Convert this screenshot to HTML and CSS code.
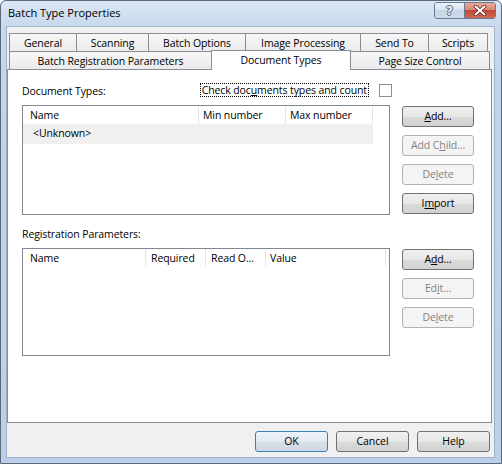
FILE: index.html
```html
<!DOCTYPE html>
<html>
<head>
<meta charset="utf-8">
<title>Batch Type Properties</title>
<link rel="stylesheet" href="styles.css">
</head>
<body>
<div class="window">
  <div class="titlebar">
    <span class="title">Batch Type Properties</span>
    <div class="caption">
      <span class="cap-btn cap-help">?</span>
      <span class="cap-btn cap-close">
        <svg width="14" height="11" viewBox="0 0 14 11"><path d="M2.5 1.5 L11.5 9.5 M11.5 1.5 L2.5 9.5" stroke="#5a1e18" stroke-width="3.6" stroke-linecap="round"/><path d="M2.5 1.5 L11.5 9.5 M11.5 1.5 L2.5 9.5" stroke="#ffffff" stroke-width="2" stroke-linecap="round"/></svg>
      </span>
    </div>
  </div>
  <div class="client">
    <div class="tabrow row-back">
      <div class="tab t-general">General</div>
      <div class="tab t-scanning">Scanning</div>
      <div class="tab t-batchopt">Batch Options</div>
      <div class="tab t-imgproc">Image Processing</div>
      <div class="tab t-sendto">Send To</div>
      <div class="tab t-scripts">Scripts</div>
    </div>
    <div class="tabrow row-front">
      <div class="tab t-brp">Batch Registration Parameters</div>
      <div class="tab tab-selected t-doc">Document Types</div>
      <div class="tab t-psc">Page Size Control</div>
    </div>
    <div class="page">
      <div class="page-head">
        <span class="label label-doc">Document Types:</span>
        <div class="check-group">
          <span class="focus-label">Check doc<u>u</u>ments types and count</span>
          <span class="checkbox"></span>
        </div>
      </div>
      <div class="section">
        <div class="listview lv-doc">
          <div class="lv-header">
            <div class="col d-name">Name</div>
            <div class="col d-min">Min number</div>
            <div class="col d-max">Max number</div>
          </div>
          <div class="lv-row selected">&lt;Unknown&gt;</div>
        </div>
        <div class="btn-col">
          <button class="btn"><span><u>A</u>dd...</span></button>
          <button class="btn disabled"><span>Add C<u>h</u>ild...</span></button>
          <button class="btn disabled"><span>De<u>l</u>ete</span></button>
          <button class="btn"><span>I<u>m</u>port</span></button>
        </div>
      </div>
      <div class="label label-reg">Registration Parameters:</div>
      <div class="section">
        <div class="listview lv-reg">
          <div class="lv-header">
            <div class="col r-name">Name</div>
            <div class="col r-req">Required</div>
            <div class="col r-read">Read O...</div>
            <div class="col r-val">Value</div>
          </div>
        </div>
        <div class="btn-col">
          <button class="btn"><span>A<u>d</u>d...</span></button>
          <button class="btn disabled"><span>Ed<u>i</u>t...</span></button>
          <button class="btn disabled"><span>De<u>l</u>ete</span></button>
        </div>
      </div>
    </div>
    <div class="footer">
      <button class="btn btn-wide btn-default"><span>OK</span></button>
      <button class="btn btn-wide"><span>Cancel</span></button>
      <button class="btn btn-wide"><span>Help</span></button>
    </div>
  </div>
</div>
</body>
</html>
```

FILE: styles.css
```css
* { box-sizing: border-box; }
html, body { margin: 0; padding: 0; }
body {
  width: 502px;
  height: 464px;
  overflow: hidden;
  background: #ffffff;
  font-family: "Open Sans", "Noto Sans", sans-serif;
  font-size: 10.5px;
  letter-spacing: -0.1px;
  color: #000000;
}

/* window frame */
.window {
  width: 502px;
  height: 464px;
  display: flex;
  flex-direction: column;
  border: 1px solid #5b6878;
  border-radius: 6px 6px 0 0;
  padding: 0 7px 6px 6px;
  background: linear-gradient(to bottom, #dae6f4 0px, #c8d9ed 26px, #c2d5ea 80px, #bbd0e8 100%);
}
.titlebar {
  flex: none;
  height: 26px;
  display: flex;
  align-items: flex-start;
}
.title {
  padding-left: 1px;
  line-height: 24px;
  font-size: 11px;
  letter-spacing: 0;
}
.caption {
  margin-left: auto;
  margin-right: -2px;
  margin-top: 1px;
  height: 17px;
  display: flex;
  border: 1px solid #687a92;
  border-radius: 3px;
  overflow: hidden;
}
.cap-btn {
  height: 100%;
  display: flex;
  align-items: center;
  justify-content: center;
}
.cap-help {
  width: 30px;
  border-right: 1px solid #687a92;
  background: linear-gradient(to bottom, #edf3fa 0%, #d9e5f2 45%, #c4d5e9 50%, #cddcee 100%);
  color: #e9eef5;
  font-family: "DejaVu Sans", sans-serif;
  font-weight: bold;
  font-size: 12px;
  letter-spacing: 0;
  text-shadow: 1px 0 0 #5d6a7a, -1px 0 0 #5d6a7a, 0 1px 0 #5d6a7a, 0 -1px 0 #5d6a7a;
}
.cap-close {
  width: 30px;
  background: linear-gradient(to bottom, #eaa898 0%, #d9897a 45%, #c4493a 50%, #d06a55 100%);
}

/* client area */
.client {
  flex: 1;
  display: flex;
  flex-direction: column;
  background: #f0f0f0;
  box-shadow: 0 0 0 1px #9fb2c9;
}

/* tabs */
.tabrow {
  flex: none;
  height: 18px;
  margin-left: 2px;
  display: flex;
}
.row-back { margin-top: 6px; }
.row-front { align-items: flex-end; }
.tab {
  height: 18px;
  border: 1px solid #898c95;
  border-right: 0;
  border-bottom: 0;
  background: linear-gradient(to bottom, #f7f7f7, #ebebeb);
  display: flex;
  align-items: center;
  justify-content: center;
  line-height: 16px;
  white-space: nowrap;
}
.tab:last-child { border-right: 1px solid #898c95; }
.t-general { width: 67px; }
.t-scanning { width: 72px; }
.t-batchopt { width: 97px; }
.t-imgproc { width: 115px; }
.t-sendto { width: 68px; }
.t-scripts { width: 60px; }
.t-brp { width: 202px; }
.t-doc { width: 140px; }
.t-psc { width: 139px; border-left: 0; }
.tab-selected {
  height: 20px;
  margin-bottom: -1px;
  border-right: 1px solid #898c95;
  background: #ffffff;
  position: relative;
  z-index: 1;
  align-items: flex-start;
  padding-top: 1px;
}

/* page */
.page {
  flex: none;
  width: 485px;
  height: 354px;
  border: 1px solid #898c95;
  background: #ffffff;
  padding-left: 14px;
}
.page-head {
  width: 370px;
  height: 35px;
  display: flex;
  justify-content: space-between;
  align-items: flex-start;
}
.label-doc {
  margin-top: 14px;
  line-height: 15px;
}
.check-group {
  margin-top: 13px;
  display: flex;
  align-items: flex-start;
}
.focus-label {
  border: 1px dotted #000000;
  padding: 0 1px;
  line-height: 12px;
  white-space: nowrap;
}
.checkbox {
  width: 13px;
  height: 13px;
  margin-left: 10px;
  margin-top: 1px;
  border: 1px solid #8e8f8f;
  background: #ffffff;
}
.label-reg {
  margin-top: 12px;
  margin-bottom: 6px;
  line-height: 15px;
}

.section {
  display: flex;
  align-items: flex-start;
}
.listview {
  width: 368px;
  border: 1px solid #828790;
  background: #ffffff;
}
.lv-doc { height: 110px; }
.lv-reg { height: 108px; }
.lv-header {
  height: 18px;
  display: flex;
}
.lv-reg .lv-header { height: 17px; }
.col {
  height: 100%;
  border-right: 1px solid #e5e5e5;
  line-height: 18px;
  padding-left: 4px;
  white-space: nowrap;
  overflow: hidden;
}
.d-name { width: 176px; padding-left: 7px; }
.d-min { width: 87px; }
.d-max { width: 87px; }
.r-name { width: 123px; padding-left: 7px; }
.r-req { width: 60px; padding-left: 5px; }
.r-read { width: 60px; padding-left: 5px; }
.r-val { width: 120px; padding-left: 4px; }
.lv-row {
  width: 350px;
  height: 20px;
  line-height: 19px;
  padding-left: 10px;
}
.lv-row.selected { background: #f0f0f0; }

/* buttons */
.btn-col {
  margin-left: 12px;
  padding-top: 1px;
  display: flex;
  flex-direction: column;
  gap: 8px;
}
.btn {
  width: 72px;
  height: 21px;
  padding: 0;
  margin: 0;
  border: 1px solid #707070;
  border-radius: 3px;
  background: linear-gradient(to bottom, #f0f0f0 0%, #e6e6e6 50%, #dadada 51%, #d2d2d2 100%);
  font: inherit;
  letter-spacing: inherit;
  color: #000000;
  display: flex;
  align-items: center;
  justify-content: center;
  line-height: 17px;
}
.btn.disabled {
  border-color: #adb2b5;
  background: #f4f4f4;
  color: #838383;
}
.btn-wide { width: 73px; }
.btn-default {
  border-color: #3c7fb1;
  background: linear-gradient(to bottom, #eef3f8 0%, #e3e9f0 50%, #d7dfe8 51%, #d0d9e3 100%);
}

/* footer */
.footer {
  flex: none;
  margin-top: 8px;
  padding-right: 4px;
  display: flex;
  justify-content: flex-end;
  gap: 8px;
}
```
